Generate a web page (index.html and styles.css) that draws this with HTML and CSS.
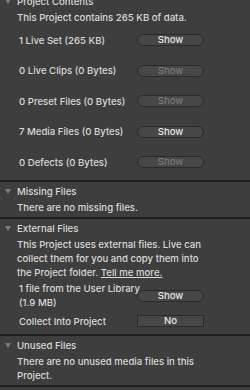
FILE: index.html
```html
<!DOCTYPE html>
<html>
<head>
    <meta charset="utf-8">
    <title>Manage Project</title>
    <link rel="stylesheet" href="styles.css">
</head>
<body>
    <div class="section first">
        <div class="section-head">
            <svg class="tri" width="6" height="5" viewBox="0 0 6 5"><path d="M0 0H6L3 5Z"/></svg>
            <span>Project Contents</span>
        </div>
        <div class="desc">This Project contains 265 KB of data.</div>
        <div class="row tall">
            <span class="label">1 Live Set (265 KB)</span>
            <button class="btn pill">Show</button>
        </div>
        <div class="row tall">
            <span class="label">0 Live Clips (0 Bytes)</span>
            <button class="btn pill off">Show</button>
        </div>
        <div class="row tall">
            <span class="label">0 Preset Files (0 Bytes)</span>
            <button class="btn pill off">Show</button>
        </div>
        <div class="row tall">
            <span class="label">7 Media Files (0 Bytes)</span>
            <button class="btn pill">Show</button>
        </div>
        <div class="row tall">
            <span class="label">0 Defects (0 Bytes)</span>
            <button class="btn pill off">Show</button>
        </div>
    </div>

    <div class="section">
        <div class="section-head">
            <svg class="tri" width="6" height="5" viewBox="0 0 6 5"><path d="M0 0H6L3 5Z"/></svg>
            <span>Missing Files</span>
        </div>
        <div class="desc">There are no missing files.</div>
    </div>

    <div class="section">
        <div class="section-head">
            <svg class="tri" width="6" height="5" viewBox="0 0 6 5"><path d="M0 0H6L3 5Z"/></svg>
            <span>External Files</span>
        </div>
        <div class="desc">This Project uses external files. Live can<br>collect them for you and copy them into<br>the Project folder. <a href="#">Tell me more.</a></div>
        <div class="row double">
            <span class="label">1 file from the User Library<br>(1.9 MB)</span>
            <button class="btn pill">Show</button>
        </div>
        <div class="row">
            <span class="label">Collect Into Project</span>
            <button class="btn box">No</button>
        </div>
    </div>

    <div class="section">
        <div class="section-head">
            <svg class="tri" width="6" height="5" viewBox="0 0 6 5"><path d="M0 0H6L3 5Z"/></svg>
            <span>Unused Files</span>
        </div>
        <div class="desc">There are no unused media files in this<br>Project.</div>
    </div>
</body>
</html>
```

FILE: styles.css
```css
body {
    margin: 0;
    background-color: #3e3e3e;
    color: #dadada;
    font-family: Inter, "Liberation Sans", sans-serif;
    font-size: 9.6px;
    font-weight: 500;
    overflow: hidden;
}
.section {
    border-bottom: 2px solid #1f1f1f;
    padding-bottom: 2px;
}
.section.first {
    margin-top: -8px;
}
.section-head {
    height: 19px;
    display: flex;
    align-items: center;
    padding-left: 5px;
}
.tri {
    fill: #7c7c7c;
    margin-right: 6px;
}
.desc {
    padding-left: 17px;
    line-height: 14px;
    white-space: nowrap;
}
.desc a {
    color: #dadada;
}
.row {
    display: flex;
    align-items: center;
    height: 21px;
    padding-left: 19px;
}
.row.tall {
    height: 30.5px;
}
.row.double {
    height: 30px;
    margin-top: 1px;
    line-height: 14px;
}
.label {
    width: 118px;
    white-space: nowrap;
}
.btn {
    width: 67px;
    height: 12px;
    padding: 0;
    border: 1px solid #2a2a2a;
    background-color: #474747;
    color: #e6e6e6;
    font-family: inherit;
    font-size: 9.6px;
    font-weight: 500;
    line-height: 10px;
}
.pill {
    border-radius: 6px;
}
.box {
    border-radius: 1px;
}
.off {
    color: #797979;
}
```
